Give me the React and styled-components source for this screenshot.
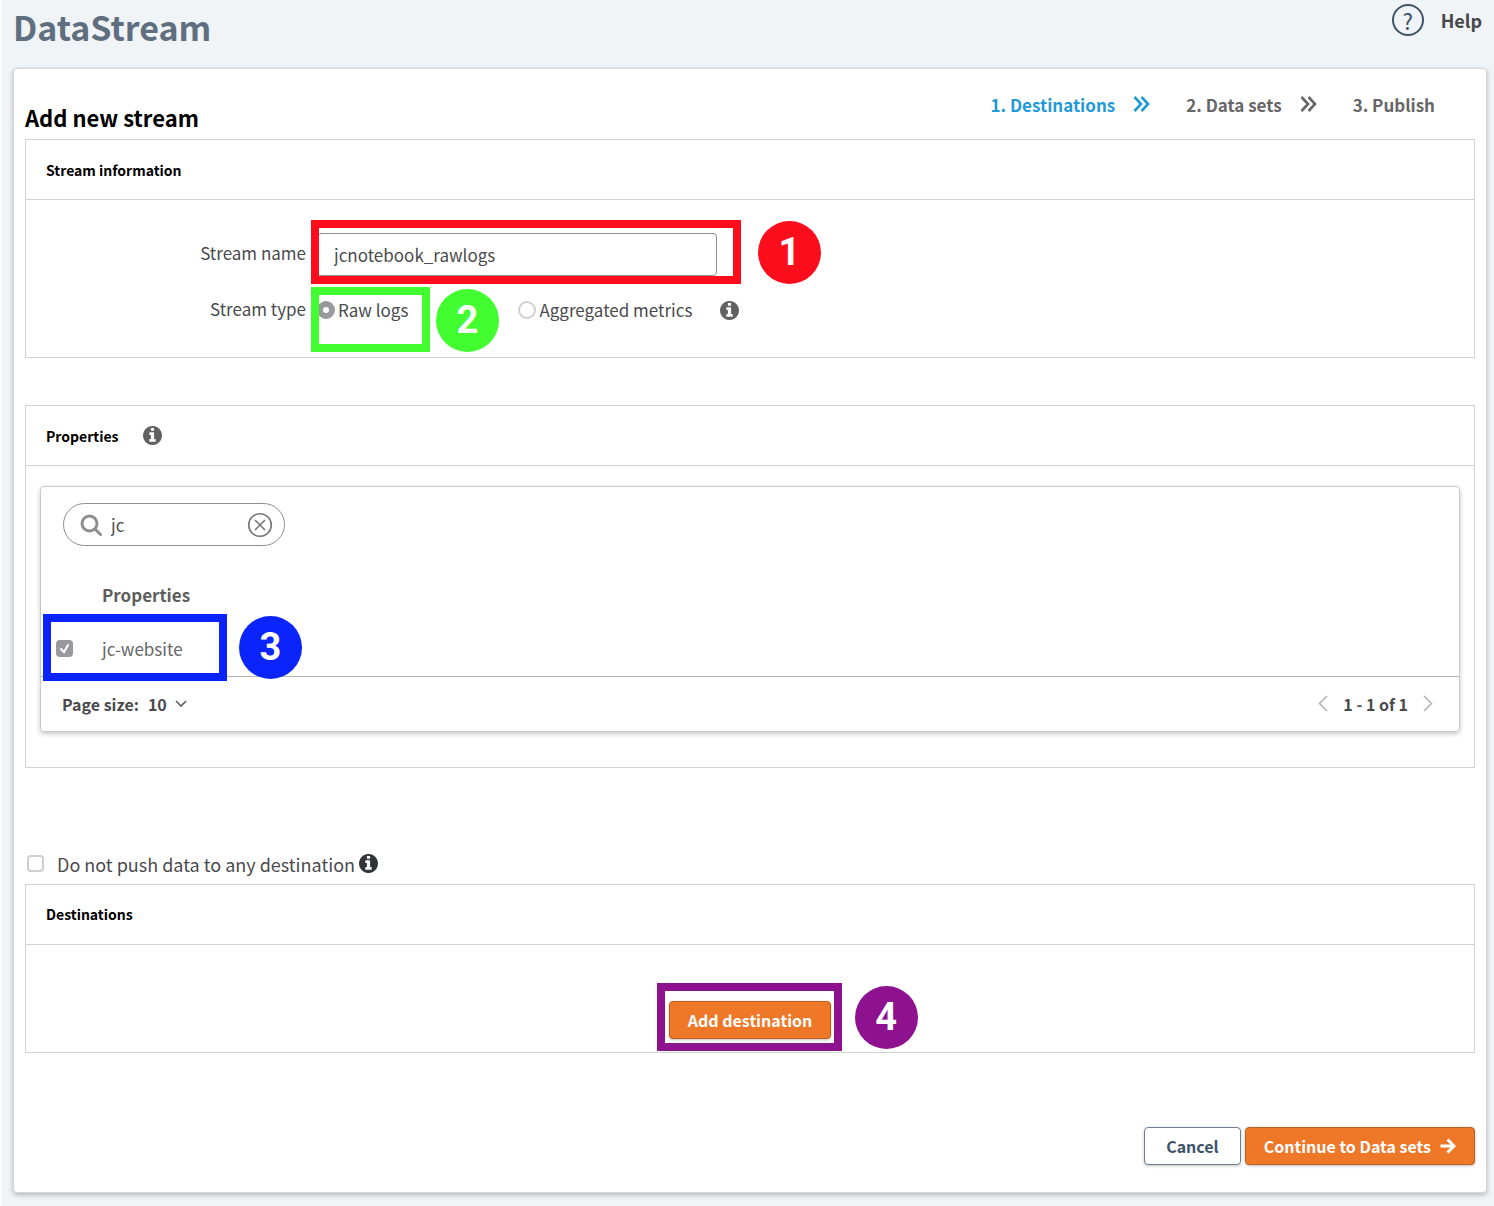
import { useState } from "react";
import styled, { createGlobalStyle } from "styled-components";

const GlobalStyle = createGlobalStyle`
  * {
    box-sizing: border-box;
  }
  body {
    margin: 0;
    background-color: #f0f4f7;
    color: #4a4b4d;
    font-family: "Noto Sans CJK SC", "Open Sans", sans-serif;
    font-size: 17px;
    line-height: 24px;
  }
  input, select, button {
    font-family: inherit;
    font-size: inherit;
    line-height: inherit;
    color: inherit;
    margin: 0;
  }
`;

const Page = styled.div`
  border-left: 1px solid #fff;
  padding: 0 7px 14px 12px;
`;

const TopBar = styled.header`
  display: flex;
  justify-content: space-between;
  height: 68px;
`;

const Brand = styled.h1`
  margin: 0;
  font-size: 34px;
  line-height: 54px;
  font-weight: 700;
  color: #5f6f80;
`;

const HelpLink = styled.a`
  display: flex;
  align-items: center;
  gap: 17px;
  height: 40px;
  padding-right: 5px;
  font-size: 18px;
  font-weight: 700;
  color: #47484a;
  text-decoration: none;
`;

const HelpMark = styled.span`
  width: 32px;
  height: 32px;
  border: 2px solid #3d5368;
  border-radius: 50%;
  font-size: 22px;
  line-height: 28px;
  font-weight: 400;
  text-align: center;
  color: #3d5368;
`;

const Card = styled.main`
  background-color: #fff;
  border: 1px solid #d3d6d9;
  border-radius: 4px;
  box-shadow: 0 2px 5px rgba(0, 0, 0, 0.25);
  padding: 0 11px 27px;
`;

const CardHead = styled.div`
  display: flex;
  justify-content: space-between;
  height: 70px;
`;

const CardTitle = styled.h2`
  margin: 0;
  padding-top: 34px;
  font-size: 22px;
  line-height: 28px;
  font-weight: 700;
  color: #000;
`;

const Steps = styled.nav`
  display: flex;
  align-items: center;
  height: 72px;
  padding-right: 40px;
`;

const Step = styled.a`
  display: flex;
  align-items: center;
  gap: 18px;
  margin-left: 36px;
  font-weight: 700;
  color: ${(props) => (props.$active ? "#1f9ad6" : "#666")};
  text-decoration: none;
`;

const Section = styled.section`
  border: 1px solid #d3d3d3;
  margin-bottom: ${(props) => props.$space}px;
`;

const SectionHead = styled.div`
  display: flex;
  align-items: center;
  gap: 24px;
  height: 60px;
  padding-left: 20px;
  border-bottom: 1px solid #d3d3d3;
`;

const SectionTitle = styled.h3`
  margin: 0;
  font-size: 14px;
  font-weight: 700;
  color: #000;
`;

const InfoSvg = styled.svg`
  flex: none;
  width: 19px;
  height: 19px;
  fill: ${(props) => props.$tone || "#616161"};
`;

const StreamForm = styled.div`
  display: grid;
  grid-template-columns: 280px 1fr;
  column-gap: 11px;
  row-gap: 14px;
  padding: 33px 0 26px;
`;

const FieldLabel = styled.label`
  text-align: right;
  line-height: 40px;
`;

const Field = styled.div`
  position: relative;
  display: flex;
  align-items: center;
  height: 42px;
`;

const TextInput = styled.input`
  width: 400px;
  height: 43px;
  padding: 0 16px;
  border: 1px solid #8e8e8e;
  border-radius: 4px;
  background-color: #fff;
`;

const Option = styled.label`
  display: flex;
  align-items: center;
  gap: 3px;
`;

const OptionGroup = styled.div`
  position: relative;
  display: flex;
  align-items: center;
  height: 42px;

  ${Option} + ${Option} {
    margin-left: 110px;
  }
  ${InfoSvg} {
    margin-left: 28px;
  }
`;

const Radio = styled.input`
  appearance: none;
  width: 18px;
  height: 18px;
  border: 2px solid #cfcfcf;
  border-radius: 50%;
  background-color: #fff;

  &:checked {
    border: 6px solid #98989d;
  }
`;

const Check = styled.input`
  appearance: none;
  display: block;
  width: 17px;
  height: 17px;
  border: 2px solid #cfcfcf;
  border-radius: 4px;
  background-color: #fff;

  &:checked {
    border-color: #98989d;
    background: #98989d
      url("data:image/svg+xml,%3Csvg xmlns='http://www.w3.org/2000/svg' viewBox='0 0 13 13'%3E%3Cpath d='M3 7l3 3 4-7' fill='none' stroke='white' stroke-width='2' stroke-linecap='round'/%3E%3C/svg%3E");
  }
`;

const Panel = styled.div`
  margin: 20px 14px 35px;
  border: 1px solid #c9c9c9;
  border-radius: 4px;
  box-shadow: 0 2px 5px rgba(0, 0, 0, 0.22);
`;

const SearchBox = styled.div`
  display: flex;
  align-items: center;
  width: 222px;
  height: 43px;
  margin: 16px 0 22px 22px;
  padding: 0 11px 0 16px;
  border: 1px solid #8e8e8e;
  border-radius: 22px;
`;

const SearchInput = styled.input`
  flex: 1;
  min-width: 0;
  padding: 0 0 0 9px;
  border: none;
  outline: none;
  background: none;
`;

const IconButton = styled.button`
  display: flex;
  padding: 0;
  border: none;
  background: none;
  cursor: pointer;
`;

const Table = styled.table`
  width: 100%;
  border-collapse: collapse;
  border-bottom: 1px solid #b5b5b5;
`;

const HeadCell = styled.th`
  height: 54px;
  padding: 0;
  text-align: left;
  font-weight: 700;
  color: #5e5e5e;
`;

const Cell = styled.td`
  position: relative;
  width: ${(props) => props.$width};
  height: 54px;
  padding: 0 0 0 ${(props) => props.$indent || 0}px;
  color: #666;
`;

const PanelFoot = styled.div`
  display: flex;
  align-items: center;
  justify-content: space-between;
  height: 54px;
  padding: 0 26px 0 21px;
  font-size: 16px;
  font-weight: 700;
`;

const PageSize = styled.div`
  display: flex;
  align-items: center;
  gap: 9px;
`;

const SizePicker = styled.span`
  display: flex;
  align-items: center;
`;

const SizeSelect = styled.select`
  appearance: none;
  width: 40px;
  margin-right: -13px;
  padding: 0;
  border: none;
  background: none;
  font-weight: 700;
`;

const Pager = styled.div`
  display: flex;
  align-items: center;
  gap: 15px;
`;

const PushOption = styled.div`
  display: flex;
  align-items: center;
  gap: 4px;
  height: 24px;
  margin-bottom: 8px;
  padding-left: 2px;
  font-size: 18px;
`;

const PushLabel = styled.label`
  margin-left: 9px;
`;

const DestinationBody = styled.div`
  display: flex;
  justify-content: center;
  padding: 56px 0 13px;
`;

const Anchor = styled.div`
  position: relative;
`;

const Button = styled.button`
  display: flex;
  align-items: center;
  justify-content: center;
  gap: 9px;
  height: 38px;
  padding: 0 18px;
  border: 1px solid ${(props) => (props.$plain ? "#6f8091" : "#bd5f1b")};
  border-radius: 4px;
  background-color: ${(props) => (props.$plain ? "#fff" : "#ee7828")};
  box-shadow: 0 1px 3px rgba(0, 0, 0, 0.25);
  color: ${(props) => (props.$plain ? "#3d5368" : "#fff")};
  font-size: 16px;
  font-weight: 700;
  cursor: pointer;
`;

const Actions = styled.div`
  display: flex;
  justify-content: flex-end;
  gap: 4px;

  ${Button}:first-child {
    padding: 0 21px;
  }
`;

// numbered call-outs that sit on top of the form
const Highlight = styled.div`
  position: absolute;
  left: ${(props) => props.$x}px;
  top: ${(props) => props.$y}px;
  width: ${(props) => props.$w}px;
  height: ${(props) => props.$h}px;
  border: 8px solid ${(props) => props.color};
  pointer-events: none;
`;

const Bubble = styled.div`
  position: absolute;
  left: ${(props) => props.$x}px;
  top: ${(props) => props.$y}px;
  width: 63px;
  height: 63px;
  border-radius: 50%;
  background-color: ${(props) => props.color};
  color: #fff;
  font-family: Roboto, sans-serif;
  font-size: 38px;
  font-weight: 700;
  line-height: 62px;
  text-align: center;
  z-index: 1;
`;

const Info = ({ tone }) => (
  <InfoSvg $tone={tone} viewBox="128 128 1536 1536">
    <path d="M1152 1376v-160q0-14-9-23t-23-9h-96v-512q0-14-9-23t-23-9h-320q-14 0-23 9t-9 23v160q0 14 9 23t23 9h96v320h-96q-14 0-23 9t-9 23v160q0 14 9 23t23 9h448q14 0 23-9t9-23zm-128-896v-160q0-14-9-23t-23-9h-192q-14 0-23 9t-9 23v160q0 14 9 23t23 9h192q14 0 23-9t9-23zm640 416q0 209-103 385.5t-279.5 279.5-385.5 103-385.5-103-279.5-279.5-103-385.5 103-385.5 279.5-279.5 385.5-103 385.5 103 279.5 279.5 103 385.5z" />
  </InfoSvg>
);

const DoubleChevron = () => (
  <svg width="17" height="18" viewBox="0 0 17 18" fill="none" stroke="currentColor" strokeWidth="2.6">
    <path d="M1.5 1l6.5 7-6.5 7M8.5 1l6.5 7-6.5 7" />
  </svg>
);

const Chevron = ({ d, w = 10, h = 17, color = "#b3b3b3", stroke = 1.6 }) => (
  <svg width={w} height={h} viewBox={`0 0 ${w} ${h}`} fill="none" stroke={color} strokeWidth={stroke}>
    <path d={d} />
  </svg>
);

const ArrowRight = () => (
  <svg width="16" height="16" viewBox="0 0 16 16" fill="none" stroke="currentColor" strokeWidth="3">
    <path d="M0.500 8H13.500M7.500 1.500L14 8l-6.500 6.500" />
  </svg>
);

const SearchIcon = () => (
  <svg width="22" height="22" viewBox="0 0 22 22" fill="none" stroke="#8e8e8e" strokeWidth="3">
    <circle cx="9.5" cy="9.5" r="7.5" />
    <path d="M15 15l5.5 5.5" strokeLinecap="round" />
  </svg>
);

const ClearIcon = () => (
  <svg width="26" height="26" viewBox="0 0 26 26" fill="none" stroke="#757575" strokeWidth="1.6">
    <circle cx="13" cy="13" r="11.3" />
    <path d="M8 8l10 10M18 8L8 18" />
  </svg>
);

const App = () => {
  const [name, setName] = useState("jcnotebook_rawlogs");
  const [type, setType] = useState("raw");
  const [search, setSearch] = useState("jc");
  const [selected, setSelected] = useState(true);
  const [noPush, setNoPush] = useState(false);

  return (
    <Page>
      <GlobalStyle />
      <TopBar>
        <Brand>DataStream</Brand>
        <HelpLink href="#help">
          <HelpMark>?</HelpMark>
          Help
        </HelpLink>
      </TopBar>
      <Card>
        <CardHead>
          <CardTitle>Add new stream</CardTitle>
          <Steps>
            <Step href="#destinations" $active>
              1. Destinations <DoubleChevron />
            </Step>
            <Step href="#datasets">
              2. Data sets <DoubleChevron />
            </Step>
            <Step href="#publish">3. Publish</Step>
          </Steps>
        </CardHead>

        <Section $space={47}>
          <SectionHead>
            <SectionTitle>Stream information</SectionTitle>
          </SectionHead>
          <StreamForm>
            <FieldLabel htmlFor="stream-name">Stream name</FieldLabel>
            <Field>
              <TextInput
                id="stream-name"
                value={name}
                onChange={(e) => setName(e.target.value)}
              />
              <Highlight color="#fc0d1b" $x={-6} $y={-13} $w={430} $h={64} />
              <Bubble color="#fc0d1b" $x={441} $y={-12}>1</Bubble>
            </Field>
            <FieldLabel as="span" id="stream-type">Stream type</FieldLabel>
            <OptionGroup role="radiogroup" aria-labelledby="stream-type">
              <Option>
                <Radio
                  type="radio"
                  name="type"
                  checked={type === "raw"}
                  onChange={() => setType("raw")}
                />
                Raw logs
              </Option>
              <Option>
                <Radio
                  type="radio"
                  name="type"
                  checked={type === "metrics"}
                  onChange={() => setType("metrics")}
                />
                Aggregated metrics
              </Option>
              <Info />
              <Highlight color="#42fd2f" $x={-6} $y={-2} $w={119} $h={65} />
              <Bubble color="#42fd2f" $x={119} $y={0}>2</Bubble>
            </OptionGroup>
          </StreamForm>
        </Section>

        <Section $space={84}>
          <SectionHead>
            <SectionTitle>Properties</SectionTitle>
            <Info />
          </SectionHead>
          <Panel>
            <SearchBox>
              <SearchIcon />
              <SearchInput
                aria-label="Search properties"
                value={search}
                onChange={(e) => setSearch(e.target.value)}
              />
              <IconButton aria-label="Clear" onClick={() => setSearch("")}>
                <ClearIcon />
              </IconButton>
            </SearchBox>
            <Table>
              <thead>
                <tr>
                  <HeadCell aria-label="Selected" />
                  <HeadCell>Properties</HeadCell>
                </tr>
              </thead>
              <tbody>
                <tr>
                  <Cell $width="61px" $indent={15}>
                    <Check
                      type="checkbox"
                      aria-label="jc-website"
                      checked={selected}
                      onChange={() => setSelected(!selected)}
                    />
                    <Highlight color="#0b24fb" $x={2} $y={-8} $w={184} $h={67} />
                    <Bubble color="#0b24fb" $x={198} $y={-6}>3</Bubble>
                  </Cell>
                  <Cell>jc-website</Cell>
                </tr>
              </tbody>
            </Table>
            <PanelFoot>
              <PageSize>
                <label htmlFor="page-size">Page size:</label>
                <SizePicker>
                  <SizeSelect id="page-size" defaultValue="10">
                    <option>10</option>
                    <option>25</option>
                    <option>50</option>
                  </SizeSelect>
                  <Chevron d="M1 1l5 5 5-5" w={12} h={8} color="#5e5e5e" stroke={1.6} />
                </SizePicker>
              </PageSize>
              <Pager>
                <IconButton aria-label="Previous page">
                  <Chevron d="M9 1L1.5 8.5 9 16" />
                </IconButton>
                1 - 1 of 1
                <IconButton aria-label="Next page">
                  <Chevron d="M1 1l7.5 7.5L1 16" />
                </IconButton>
              </Pager>
            </PanelFoot>
          </Panel>
        </Section>

        <PushOption>
          <Check
            type="checkbox"
            id="no-push"
            checked={noPush}
            onChange={() => setNoPush(!noPush)}
          />
          <PushLabel htmlFor="no-push">Do not push data to any destination</PushLabel>
          <Info tone="#333438" />
        </PushOption>
        <Section $space={74}>
          <SectionHead>
            <SectionTitle>Destinations</SectionTitle>
          </SectionHead>
          <DestinationBody>
            <Anchor>
              <Button>Add destination</Button>
              <Highlight color="#8e128f" $x={-12} $y={-18} $w={185} $h={68} />
              <Bubble color="#8e128f" $x={186} $y={-15}>4</Bubble>
            </Anchor>
          </DestinationBody>
        </Section>

        <Actions>
          <Button $plain>Cancel</Button>
          <Button>
            Continue to Data sets <ArrowRight />
          </Button>
        </Actions>
      </Card>
    </Page>
  );
};

export default App;
